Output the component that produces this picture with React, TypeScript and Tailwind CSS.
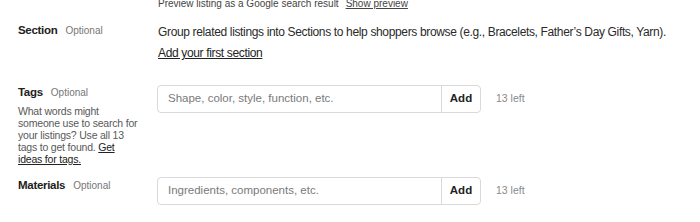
import React from "react";

const font = { fontFamily: "'Liberation Sans', Arial, sans-serif" };

function Label({ title }: { title: string }) {
  return (
    <div className="flex items-baseline gap-[8px] leading-[14px]">
      <span className="text-[11.5px] font-bold tracking-[-0.3px] text-[#222222]">{title}</span>
      <span className="text-[10px] text-[#767676]">Optional</span>
    </div>
  );
}

function TagInput({ placeholder }: { placeholder: string }) {
  return (
    <div className="flex items-center">
      <div className="flex h-[28px] w-[324px] rounded-[4px] border border-[#d9d9d9]">
        <div className="flex flex-1 items-center pl-[10px] text-[11.5px] text-[#7a7a7a]">{placeholder}</div>
        <div className="flex w-[39px] items-center justify-center border-l border-[#d9d9d9] text-[11.5px] font-bold text-[#222222]">
          Add
        </div>
      </div>
      <span className="ml-[15px] text-[10.5px] text-[#8a8a8a]">13 left</span>
    </div>
  );
}

export default function App() {
  return (
    <div className="h-[222px] w-[700px] overflow-hidden bg-white text-[#222222]" style={font}>
      <div className="-mt-[2px] flex whitespace-nowrap pl-[158px] text-[10px] leading-[12px] text-[#444444]">
        <span>Preview listing as a Google search result</span>
        <span className="ml-[7px] underline">Show preview</span>
      </div>

      <div className="mt-[13px] flex items-start">
        <div className="w-[158px] shrink-0 pl-[18px]">
          <Label title="Section" />
        </div>
        <div className="flex flex-col whitespace-nowrap tracking-[-0.35px]">
          <p className="text-[12px] leading-[18px] text-[#2a2a2a]">
            Group related listings into Sections to help shoppers browse (e.g., Bracelets, Father’s Day Gifts, Yarn).
          </p>
          <a className="mt-[3px] text-[12px] leading-[18px] text-[#222222] underline">Add your first section</a>
        </div>
      </div>

      <div className="mt-[23px] flex items-start">
        <div className="w-[157px] shrink-0 pl-[18px]">
          <Label title="Tags" />
          <p className="mt-[5px] whitespace-nowrap text-[10.5px] leading-[12px] tracking-[-0.2px] text-[#595959]">
            What words might
            <br />
            someone use to search for
            <br />
            your listings? Use all 13
            <br />
            tags to get found. <span className="text-[#222222] underline">Get</span>
            <br />
            <span className="text-[#222222] underline">ideas for tags.</span>
          </p>
        </div>
        <TagInput placeholder="Shape, color, style, function, etc." />
      </div>

      <div className="mt-[13px] flex items-start">
        <div className="w-[157px] shrink-0 pl-[18px]">
          <Label title="Materials" />
        </div>
        <div className="-mt-[1px]">
          <TagInput placeholder="Ingredients, components, etc." />
        </div>
      </div>
    </div>
  );
}
